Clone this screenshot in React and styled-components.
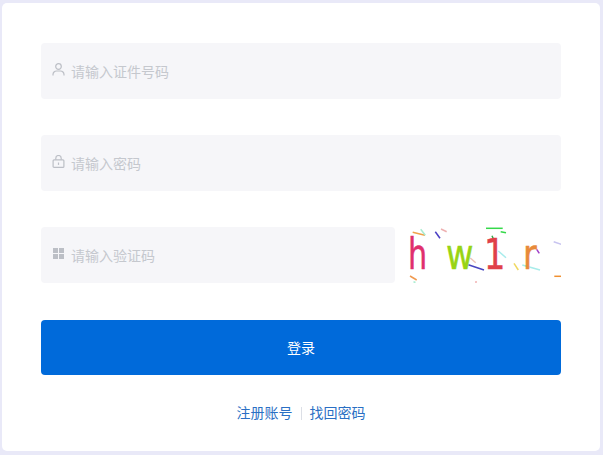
import React from 'react'
import styled, { createGlobalStyle } from 'styled-components'

const Global = createGlobalStyle`
    html, body {
        margin : 0;
        padding : 0;
        background-color : #e9e9f8;
    }
    body {
        font-family : "Liberation Sans", "Noto Sans CJK SC", sans-serif;
    }
`
const Page = styled.div`
    width : 603px;
    height : 455px;
    padding : 3px 3px 4px 2px;
    box-sizing : border-box;
    overflow : hidden;
`
const Card = styled.div`
    height : 100%;
    box-sizing : border-box;
    background-color : #fff;
    border-radius : 5px;
    padding : 40px 39px 0 39px;
    display : flex;
    flex-direction : column;
`
const Field = styled.div`
    display : flex;
    align-items : center;
    flex : ${({ $grow }) => ($grow ? '1' : 'none')};
    height : 56px;
    box-sizing : border-box;
    padding-left : 11px;
    margin-bottom : ${({ $last }) => ($last ? '0' : '36px')};
    background-color : #f6f6f9;
    border-radius : 4px;
`
const IconSlot = styled.span`
    display : flex;
    width : 13px;
    height : 13px;
    margin : -3px 6px 0 0;
    color : #bcbfc6;
`
const Placeholder = styled.span`
    padding-top : 2px;
    font-size : 14px;
    line-height : 20px;
    color : #c5c8ce;
`
const CaptchaRow = styled.div`
    display : flex;
    gap : 6px;
    margin-bottom : 37px;
`
const CaptchaBox = styled.div`
    width : 160px;
    height : 56px;
    flex : none;
`
const SubmitButton = styled.button`
    display : block;
    width : 100%;
    height : 55px;
    padding : 0 0 2px;
    border : none;
    border-radius : 4px;
    background-color : #006ada;
    color : #fff;
    font-family : inherit;
    font-size : 14px;
    cursor : pointer;
`
const Links = styled.div`
    display : flex;
    align-items : center;
    justify-content : center;
    margin-top : 28px;
    font-size : 14px;
    line-height : 20px;
    color : #2a6fc4;
`
const LinkItem = styled.a`
    color : inherit;
    text-decoration : none;
`
const Divider = styled.span`
    width : 1px;
    height : 13px;
    margin : 0 8px;
    background-color : #dcdfe6;
`

const UserIcon = () => (
    <svg width="13" height="13" viewBox="0 0 13 13" fill="none" stroke="currentColor" strokeWidth="1.2">
        <circle cx="6.5" cy="3.5" r="2.8" />
        <path d="M1 12.5v-1a3.5 3.5 0 0 1 3.5-3.5h4a3.5 3.5 0 0 1 3.5 3.5v1" />
    </svg>
)

const LockIcon = () => (
    <svg width="13" height="13" viewBox="0 0 13 13" fill="none" stroke="currentColor" strokeWidth="1.2">
        <rect x="1.1" y="4.8" width="10.8" height="7.6" rx="1" />
        <path d="M3.8 4.8V3.2a2.7 2.7 0 0 1 5.4 0v1.6" />
        <path d="M6.5 7.5v2.4" />
    </svg>
)

const GridIcon = () => (
    <svg width="13" height="13" viewBox="0 0 13 13" fill="currentColor">
        <rect x="1" y="1" width="5" height="5" />
        <rect x="7" y="1" width="5" height="5" />
        <rect x="1" y="7" width="5" height="5" />
        <rect x="7" y="7" width="5" height="5" />
    </svg>
)

const noise = [
    [11.7, 5.3, 24, 8.3, '#f0a24a'],
    [19.7, 2.3, 24.3, 8.3, '#a8ecd0'],
    [34.3, 4.7, 39, 11.3, '#4a3fc4'],
    [40, 2, 45.7, 4.7, '#eeb0b0'],
    [85, 1.3, 101.7, 1.3, '#35d84a'],
    [99.7, 4.7, 105, 5.7, '#35d84a'],
    [91, 8.7, 92.3, 11.7, '#35a84a'],
    [67.3, 37.7, 83, 43, '#4a46c0'],
    [69.3, 31, 74.7, 35.7, '#eec4b8'],
    [97.3, 24, 105, 30.7, '#a8ecec'],
    [113, 36.3, 117.3, 43, '#f0d860'],
    [121.3, 38, 139, 43, '#a8ecea'],
    [135.7, 22.3, 138.3, 26.3, '#a040c8'],
    [152.7, 14.7, 163, 18.3, '#c8c4f0'],
    [153.3, 49.3, 161, 49.3, '#f09030'],
    [9, 49, 15.7, 53, '#f09a50'],
    [12.5, 54.7, 14.5, 55.5, '#a8ecd0'],
    [74.3, 54.7, 75.7, 55.3, '#eea0a0'],
]

const letters = [
    { char: 'h', x: 7, scale: 0.72, color: '#e0306e' },
    { char: 'w', x: 45, scale: 0.8, color: '#98d414' },
    { char: '1', x: 83, scale: 0.8, color: '#e04048' },
    { char: 'r', x: 122, scale: 0.8, color: '#e88a3a' },
]

const Captcha = () => (
    <svg width="160" height="56" viewBox="0 0 160 56">
        <rect width="160" height="56" fill="#fff" />
        {noise.map(([x1, y1, x2, y2, color], i) => (
            <line key={i} x1={x1} y1={y1} x2={x2} y2={y2} stroke={color} strokeWidth="1.5" />
        ))}
        <g fontFamily="'DejaVu Sans', sans-serif" fontSize="42">
            {letters.map((l) => (
                <text key={l.char} y="42" fill={l.color} stroke={l.color} strokeWidth="0.5" transform={`translate(${l.x} 0) scale(${l.scale} 1)`}>
                    {l.char}
                </text>
            ))}
        </g>
    </svg>
)

const App = () => {
    return (
        <Page>
            <Global />
            <Card>
                <Field>
                    <IconSlot><UserIcon /></IconSlot>
                    <Placeholder>请输入证件号码</Placeholder>
                </Field>
                <Field>
                    <IconSlot><LockIcon /></IconSlot>
                    <Placeholder>请输入密码</Placeholder>
                </Field>
                <CaptchaRow>
                    <Field $grow $last>
                        <IconSlot><GridIcon /></IconSlot>
                        <Placeholder>请输入验证码</Placeholder>
                    </Field>
                    <CaptchaBox><Captcha /></CaptchaBox>
                </CaptchaRow>
                <SubmitButton>登录</SubmitButton>
                <Links>
                    <LinkItem>注册账号</LinkItem>
                    <Divider />
                    <LinkItem>找回密码</LinkItem>
                </Links>
            </Card>
        </Page>
    )
}

export default App
